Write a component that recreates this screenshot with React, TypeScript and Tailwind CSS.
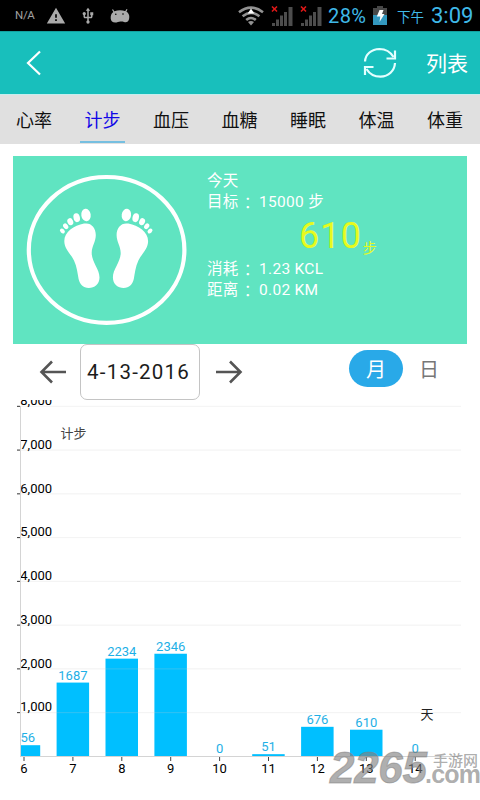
import { MdUsb, MdWarning } from "react-icons/md";

interface DaySteps {
  day: number;
  steps: number;
  label: string;
}

const tabs = ["心率", "计步", "血压", "血糖", "睡眠", "体温", "体重"];

const data: DaySteps[] = [
  { day: 6, steps: 256, label: "56" },
  { day: 7, steps: 1687, label: "1687" },
  { day: 8, steps: 2234, label: "2234" },
  { day: 9, steps: 2346, label: "2346" },
  { day: 10, steps: 0, label: "0" },
  { day: 11, steps: 51, label: "51" },
  { day: 12, steps: 676, label: "676" },
  { day: 13, steps: 610, label: "610" },
  { day: 14, steps: 0, label: "0" },
];

const ticks = [1, 2, 3, 4, 5, 6, 7, 8];

const SignalIcon = ({ className }: { className: string }) => (
  <svg viewBox="0 0 22 20" className={`w-[22px] h-5 shrink-0 ${className}`}>
    <path d="M1 0.5l5 5M6 0.5l-5 5" stroke="#e01818" strokeWidth="1.5" />
    <g fill="#4d4d4d">
      <rect x="1" y="17" width="3" height="3" />
      <rect x="5" y="13.5" width="3" height="6.5" />
      <rect x="9" y="9.5" width="3" height="10.5" />
      <rect x="13" y="6" width="3" height="14" />
      <rect x="17.5" y="1" width="4" height="19" />
    </g>
  </svg>
);

const StatusBar = () => (
  <div className="h-[31px] bg-black flex items-center text-[#3fb9e8] whitespace-nowrap shrink-0">
    <span className="ml-[15px] w-5 text-[11.5px] tracking-[-0.3px] text-[#a0a0a0]">
      N/A
    </span>
    <MdWarning className="ml-[11px] w-5 h-5 text-[#aaaaaa]" />
    <MdUsb className="ml-[13px] w-[18px] h-[18px] text-[#aaaaaa]" />
    <svg viewBox="0 0 20 14" className="ml-[13px] w-5 h-[14px] text-[#aaaaaa]">
      <path
        d="M2.5 0.5l2 3.2M17 0.3l-1.8 3.2"
        stroke="currentColor"
        strokeWidth="1.2"
      />
      <path
        d="M4.5 2.2C8 1 12 1 15.5 2.2C18.8 3.6 20 6.8 19 10.3C18.4 12.8 16.5 13.6 14 12.9C11 12.2 9.5 12.8 6.5 13.4C3 13.8 1 12.7 0.7 9.5C0.4 6.2 1.8 3.4 4.5 2.2Z"
        fill="currentColor"
      />
      <circle cx="5.8" cy="5.2" r="0.8" fill="#000" />
      <circle cx="13" cy="5" r="0.8" fill="#000" />
    </svg>
    <svg viewBox="0 0 26 20" className="ml-[108px] w-[26px] h-5 shrink-0">
      <g fill="none" stroke="#929292" strokeWidth="2.6">
        <path d="M1 6.3Q13 -3 25 6.3" />
        <path d="M4.6 10.3Q13 3.6 21.4 10.3" />
        <path d="M8.2 14Q13 10 17.8 14" />
      </g>
      <path d="M10 16Q13 13.8 16 16L13 19.5Z" fill="#929292" />
      <path d="M13 2.5l3.3 5h-6.6z" fill="#fff" />
    </svg>
    <SignalIcon className="ml-[7px]" />
    <SignalIcon className="ml-[7px]" />
    <span className="ml-1.5 w-10 pt-px text-[20px] tracking-[0.4px]">28%</span>
    <svg viewBox="0 0 14 19" className="ml-[5px] w-[14px] h-[19px] shrink-0">
      <path d="M4 0h6v2h4v17H0V2h4z" fill="#484848" />
      <rect y="9" width="14" height="10" fill="#3398bf" />
      <path d="M6.5 4h4l-1.5 4h2.500l-5 8 0.8-5.5H3.8z" fill="#fff" />
    </svg>
    <span className="ml-[10px] w-7 pt-1 text-[13.5px]">下午</span>
    <span className="ml-[6px] text-[22px]">3:09</span>
  </div>
);

const Header = () => (
  <div className="h-[63px] bg-[#18bfbc] border-t border-[#12a29f] flex items-center text-white shrink-0">
    <svg
      viewBox="0 0 16 26"
      className="ml-[26px] w-4 h-[26px]"
      fill="none"
      stroke="currentColor"
      strokeWidth="2.2"
    >
      <path d="M14 1.5L2 13L14 24.5" />
    </svg>
    <svg
      viewBox="0 0 34 32"
      className="ml-auto w-[34px] h-8"
      fill="none"
      stroke="#e4ffff"
      strokeWidth="2.2"
    >
      <path d="M2 14.5C2.5 7 8.5 2.2 16.5 2C23 2 27.5 5 30.5 10" />
      <path d="M32 3.5V11.500H23.5" />
      <path d="M32 16C31.5 24 25.5 29.5 17.500 29.700C11 29.7 6.5 27 3.500 22" />
      <path d="M2 28V20H10.5" />
    </svg>
    <span className="ml-[29px] mr-3 pt-[3px] text-[21px]">列表</span>
  </div>
);

const Foot = () => (
  <g fill="#fff">
    <ellipse cx="86" cy="215" rx="4.7" ry="6.3" transform="rotate(-8 86 215)" />
    <ellipse cx="76.7" cy="217.7" rx="3.2" ry="4.5" transform="rotate(-12 76.7 217.7)" />
    <ellipse cx="70.3" cy="221.7" rx="2.8" ry="3.6" transform="rotate(-25 70.3 221.7)" />
    <ellipse cx="65.7" cy="226.3" rx="2.3" ry="3.1" transform="rotate(-35 65.7 226.3)" />
    <ellipse cx="62.4" cy="231" rx="2" ry="2.8" transform="rotate(-45 62.4 231)" />
    <path d="M84 223.6C91 222.3 95.8 227.5 95.8 235C95.8 242 91.8 246 91.7 253C91.7 262 99.5 269 99.5 277.5C99.5 284 94.5 288 88.8 288C83 288 80 284.5 78.6 279C77.5 273 77 267 74 260.5C70.5 253.5 64.3 249 64.3 241C64.3 232 74 225.5 84 223.6Z" />
  </g>
);

const Stat = ({ name, value }: { name: string; value: string }) => (
  <p className="h-[20.7px] flex">
    <span className="w-8">{name}</span>
    <span className="w-5 pl-px font-['Noto_Sans_CJK_TC']">：</span>
    <span>{value}</span>
  </p>
);

const SummaryCard = () => (
  <div className="mx-[13px] mt-[12px] w-[454px] h-[188px] bg-[#60e4c1] flex text-white shrink-0">
    <svg viewBox="26 174 161 152" className="ml-[13px] mt-[18px] w-[161px] h-[152px]">
      <ellipse
        cx="106.6"
        cy="249.9"
        rx="77.8"
        ry="72.9"
        fill="none"
        stroke="#fff"
        strokeWidth="4.2"
      />
      <Foot />
      <g transform="translate(212.4 0) scale(-1 1)">
        <Foot />
      </g>
    </svg>
    <div className="ml-5 pt-[15px] text-[15.5px] leading-[20.7px] tracking-[0.3px] whitespace-nowrap">
      <p className="h-[20.7px]">今天</p>
      <Stat name="目标" value="15000 步" />
      <p className="pl-[92px] h-[47px] flex items-start text-[#e6fa1e]">
        <span className="text-[36px] leading-[49px] tracking-[0.7px]">
          610
        </span>
        <span className="text-[14px] leading-5 mt-[26px] ml-px">步</span>
      </p>
      <Stat name="消耗" value="1.23 KCL" />
      <Stat name="距离" value="0.02 KM" />
    </div>
  </div>
);

const DateBar = () => (
  <div className="h-14 flex items-start shrink-0">
    <svg
      viewBox="0 0 28 24"
      className="ml-[39px] mt-[16px] w-7 h-6"
      fill="none"
      stroke="#555"
      strokeWidth="2.6"
    >
      <path d="M27 12H2.5M13 1.5L2.5 12L13 22.5" />
    </svg>
    <div className="ml-[13px] w-[120px] h-14 pr-[3px] border border-[#c4c4c4] rounded-[7px] flex items-center justify-center text-[20.5px] tracking-[1.2px] text-[#1b1b1b] whitespace-nowrap">
      4-13-2016
    </div>
    <svg
      viewBox="0 0 28 24"
      className="ml-[15px] mt-[16px] w-7 h-6"
      fill="none"
      stroke="#555"
      strokeWidth="2.6"
    >
      <path d="M1 12H25.5M15 1.5L25.5 12L15 22.5" />
    </svg>
    <div className="ml-[106px] mt-[6px] w-[54px] h-[37px] pt-0.5 rounded-full bg-[#29a9e8] text-white text-[20px] flex items-center justify-center">
      月
    </div>
    <span className="ml-4 mt-[6px] h-[37px] pt-0.5 flex items-center text-[20px] text-[#777]">
      日
    </span>
  </div>
);

const BASE = 756.4;
const UNIT = 43.76;

const StepsChart = () => (
  <svg viewBox="0 400 480 400" className="w-[480px] h-[400px] shrink-0 text-[13px]">
    <clipPath id="plot">
      <rect x="20" y="400" width="441" height="357" />
    </clipPath>
    <g clipPath="url(#plot)">
      {data.map(({ day, steps, label }) => {
        const x = 24 + (day - 6) * 48.9;
        const h = (steps * UNIT) / 1000;
        return (
          <g key={day}>
            <rect x={x - 16.3} y={BASE - h} width="32.5" height={h} fill="#00bfff" />
            <text
              x={day === 6 ? 35 : x}
              y={BASE - h - 3}
              textAnchor={day === 6 ? "end" : "middle"}
              fill="#1eb0e6"
            >
              {label}
            </text>
          </g>
        );
      })}
    </g>
    {ticks.map((t) => (
      <g key={t}>
        <rect x="20" y={BASE - t * UNIT - 0.5} width="441" height="1" fill="#ccc" fillOpacity="0.25" />
        <rect x="17" y={BASE - t * UNIT - 0.5} width="3" height="1" fill="#333" />
        <text x="20.3" y={BASE - t * UNIT - 1.2} fill="#000">
          {t},000
        </text>
      </g>
    ))}
    <rect x="20" y="406" width="1" height="351" fill="#d4d4d4" />
    <rect x="20" y="756" width="441" height="1" fill="#d4d4d4" />
    {data.map(({ day }) => (
      <g key={day}>
        <rect x={23.5 + (day - 6) * 48.9} y="757" width="1" height="4" fill="#444" />
        <text x={24 + (day - 6) * 48.9} y="773.3" textAnchor="middle" fill="#000">
          {day}
        </text>
      </g>
    ))}
    <text x="60.5" y="438" fill="#444">
      计步
    </text>
    <text x="420.5" y="719" fill="#222">
      天
    </text>
    {/* site mark */}
    <g fill="#808080" fillOpacity="0.65" className="font-bold">
      <text
        x="330"
        y="782.5"
        textLength="97"
        stroke="#808080"
        strokeOpacity="0.5"
        className="text-[44px] italic font-['Liberation_Sans']"
      >
        2265
      </text>
      <text x="425" y="782.5" textLength="56" className="text-[25px] font-['Liberation_Sans']">
        .com
      </text>
      <text x="433" y="765.5" textLength="45" className="text-[15px] font-medium">
        手游网
      </text>
    </g>
  </svg>
);

const App = () => {
  return (
    <div className="w-[480px] h-[800px] bg-white overflow-hidden flex flex-col font-['Roboto','Noto_Sans_CJK_SC',sans-serif]">
      <StatusBar />
      <Header />
      <div className="h-[50px] bg-[#e0e0e0] border-t border-[#c5eeee] flex justify-between pl-[11.5px] pr-[12.5px] shrink-0">
        {tabs.map((tab, i) => (
          <div
            key={tab}
            className={`w-[45px] pt-1 text-[18px] flex items-center justify-center border-b-2 mb-px ${
              i === 1
                ? "text-[#1208e6] border-[#76bfe0]"
                : "text-[#111] border-transparent"
            }`}
          >
            {tab}
          </div>
        ))}
      </div>
      <SummaryCard />
      <DateBar />
      <StepsChart />
    </div>
  );
};

export default App;
